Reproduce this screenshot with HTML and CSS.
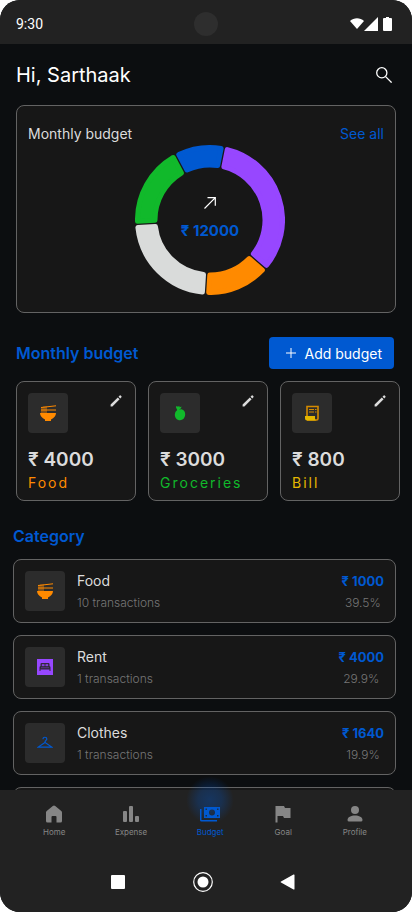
FILE: index.html
```html
<!DOCTYPE html>
<html lang="en">
<head>
<meta charset="utf-8">
<meta name="viewport" content="width=device-width, initial-scale=1">
<title>Budget</title>
<link rel="stylesheet" href="styles.css">
</head>
<body>
<svg class="sprite" aria-hidden="true">
  <symbol id="bowl" viewBox="0 0 16 16">
    <path d="M0 8h16c0 3-2 5-5 6.500V16H5v-1.500C2 13 0 11 0 8z"/>
    <path d="M2 8V2M4 8V1.500M6 8V1.500" fill="none" stroke="currentColor" stroke-width=".8"/>
    <path d="M1 2.500L16 .8M1 5h15" fill="none" stroke="currentColor" stroke-width="1"/>
  </symbol>
  <symbol id="pencil" viewBox="0 0 12 12">
    <path d="M.6 9.600L7.800 2.400l1.800 1.800-7.200 7.200H.6zM8.500 1.700L9.700.6q.5-.5 1 0l.7.7q.5.500 0 1l-1.100 1.200z"/>
  </symbol>
</svg>
<div class="app">
  <div class="status">
    <span class="time">9:30</span>
    <span class="camera"></span>
    <svg class="signals" viewBox="0 0 42 16" aria-hidden="true">
      <path d="M0 5c4-3.600 10-3.600 14 0L7 13z"/>
      <path d="M28 1v14H14z"/>
      <path d="M34 2h2V1h3v1h2q1 0 1 1v11q0 1-1 1h-7q-1 0-1-1V3q0-1 1-1z"/>
    </svg>
  </div>

  <main class="content">
    <header class="greeting">
      <h1>Hi, Sarthaak</h1>
      <button class="search" type="button" aria-label="Search">
        <svg viewBox="0 0 16 16"><circle cx="5.800" cy="5.800" r="5.100"/><path d="M9.600 9.600l6 6"/></svg>
      </button>
    </header>

    <section class="overview">
      <div class="overview-head">
        <h2>Monthly budget</h2>
        <a href="#all">See all</a>
      </div>
      <div class="donut">
        <svg class="ring" viewBox="0 0 150 150" aria-hidden="true">
          <path class="blue" d="M43.800 9.600A72.500 72.500 0 0 1 86.100 3.400L82.700 20.500A55 55 0 0 0 52 25z"/>
          <path class="purple" d="M92.300 4.600A72.500 72.500 0 0 1 131.600 120.300L118.400 108.800A55 55 0 0 0 88.900 21.800z"/>
          <path class="orange" d="M127.400 125.100A72.500 72.500 0 0 1 73.700 147.500L74.800 130A55 55 0 0 0 114.200 113.600z"/>
          <path class="silver" d="M67.400 147.100A72.500 72.500 0 0 1 2.900 82.600L20.400 81.500A55 55 0 0 0 68.500 129.600z"/>
          <path class="green" d="M2.500 76.300A72.500 72.500 0 0 1 38.200 12.500L46.400 28A55 55 0 0 0 20 75.200z"/>
        </svg>
        <div class="total">
          <svg class="arrow" viewBox="0 0 12 12" aria-hidden="true"><path d="M.5 11.500L11.300.7M3.500.7h7.800v8"/></svg>
          <strong>₹ 12000</strong>
        </div>
      </div>
    </section>

    <section>
      <div class="section-head">
        <h2>Monthly budget</h2>
        <button class="add" type="button">
          <svg viewBox="0 0 10 10" aria-hidden="true"><path d="M5 0v10M0 5h10"/></svg>Add budget
        </button>
      </div>
      <ul class="budgets">
        <li class="budget food">
          <div class="budget-top">
            <span class="tile"><svg><use href="#bowl"/></svg></span>
            <button class="edit" type="button" aria-label="Edit food"><svg><use href="#pencil"/></svg></button>
          </div>
          <strong>₹ 4000</strong>
          <span class="label">Food</span>
        </li>
        <li class="budget groceries">
          <div class="budget-top">
            <span class="tile"><svg viewBox="0 0 16 16"><path d="M7 4.800Q8 4 9.500 4.200q3.700 1 3.700 5.300c-.2 3.500-2.300 5.700-5.200 5.700S3 13 2.800 9.700q0-3 2.400-4.700L4 2.500 4.300.9l1.900.8.900-.9.700 1.500L9.500 1.500 9 3.300z"/></svg></span>
            <button class="edit" type="button" aria-label="Edit groceries"><svg><use href="#pencil"/></svg></button>
          </div>
          <strong>₹ 3000</strong>
          <span class="label">Groceries</span>
        </li>
        <li class="budget bill">
          <div class="budget-top">
            <span class="tile"><svg viewBox="0 0 16 16"><path class="roll" d="M3 11V1.500h11v12q0 1.500-1.500 1.500H3"/><path class="lines" d="M5 4.500h5M5 7h5M11 4.500h1.500M11 7h1.500"/><path d="M1 11h10v2.500q0 1 1 2H3q-2 0-2-2z"/></svg></span>
            <button class="edit" type="button" aria-label="Edit bill"><svg><use href="#pencil"/></svg></button>
          </div>
          <strong>₹ 800</strong>
          <span class="label">Bill</span>
        </li>
      </ul>
    </section>

    <section class="categories">
      <h2>Category</h2>
      <ul>
        <li class="category food">
          <span class="tile"><svg><use href="#bowl"/></svg></span>
          <div class="name"><h3>Food</h3><p>10 transactions</p></div>
          <div class="sum"><strong>₹ 1000</strong><span>39.5%</span></div>
        </li>
        <li class="category rent">
          <span class="tile"><svg viewBox="0 0 16 16"><path d="M0 0h16v16H0z"/><path class="cut" d="M4.500 4h7q1 0 1 1v2q1 0 1 1.500V12h-1v-1.500h-9V12h-1V8.500Q2.500 7 3.500 7V5q0-1 1-1z"/><path class="pillow" d="M5 5.500h2.300v1.300H5zM8.700 5.500H11v1.300H8.700zM4 8.700h8"/></svg></span>
          <div class="name"><h3>Rent</h3><p>1 transactions</p></div>
          <div class="sum"><strong>₹ 4000</strong><span>29.9%</span></div>
        </li>
        <li class="category clothes">
          <span class="tile"><svg viewBox="0 0 16 16"><path class="hanger" d="M6 4.200C6 1.500 9.800 1.700 9.800 4c0 1.300-1.800 1.500-1.800 3v.5l6.800 4.600H1.200L8 7.500"/></svg></span>
          <div class="name"><h3>Clothes</h3><p>1 transactions</p></div>
          <div class="sum"><strong>₹ 1640</strong><span>19.9%</span></div>
        </li>
        <li class="category"></li>
      </ul>
    </section>
  </main>

  <footer class="bottom">
    <nav class="tabs">
      <a href="#home"><svg viewBox="0 0 20 20"><path d="M2 8.500Q2 7.500 3 6.700L8.800 2q1.200-1 2.400 0L17 6.700q1 .8 1 1.800V17q0 1.500-1.500 1.500h-4v-5.500q0-1-1-1h-3q-1 0-1 1v5.500h-4Q2 18.500 2 17z"/></svg>Home</a>
      <a href="#expense"><svg viewBox="0 0 20 20"><rect x="2" y="7" width="4" height="11" rx="1"/><rect x="8" y="2" width="4" height="16" rx="1"/><rect x="14" y="12" width="4" height="6" rx="1"/></svg>Expense</a>
      <a class="active" href="#budget"><svg viewBox="0 0 20 20"><path fill-rule="evenodd" d="M4 3h16v11H4zM12 5.500a3 3 0 1 0 0 6a3 3 0 0 0 0-6zM5.500 4.500V6H7V4.500zM17 4.500V6h1.500V4.500zM5.500 11v1.500H7V11zM17 11v1.500h1.500V11z"/><path d="M0 5h1.500v11H17v1.500H1.500Q0 17.500 0 16z"/></svg>Budget</a>
      <a href="#goal"><svg viewBox="0 0 20 20"><path d="M2.500 2h8.500l1 2h5.500v10H11l-1-2H4.500v6.500h-2z"/></svg>Goal</a>
      <a href="#profile"><svg viewBox="0 0 20 20"><circle cx="10" cy="6" r="4"/><path d="M2.500 16c0-3 3.500-4.500 7.500-4.500s7.500 1.500 7.500 4.500q0 1.500-1.500 1.500H4q-1.500 0-1.500-1.500z"/></svg>Profile</a>
    </nav>
    <div class="system">
      <button type="button" aria-label="Recent apps"><svg viewBox="0 0 20 20"><rect x="3" y="3" width="14" height="14" rx="1"/></svg></button>
      <button type="button" aria-label="Home screen"><svg viewBox="0 0 20 20"><circle class="outline" cx="10" cy="10" r="9.300"/><circle cx="10" cy="10" r="5.500"/></svg></button>
      <button type="button" aria-label="Back"><svg viewBox="0 0 20 20"><path d="M3 9.400L15.500 2.500q1-.4 1 .6v13.800q0 1-1 .6L3 10.600q-1-.6 0-1.200z"/></svg></button>
    </div>
  </footer>
</div>
</body>
</html>
```
FILE: styles.css
```css
* { box-sizing: border-box; }
body {
  margin: 0;
  background: #fff;
  color: #dcdcdc;
  font-family: Inter, "Noto Sans", sans-serif;
}
h1, h2, h3, p, ul { margin: 0; padding: 0; }
ul { list-style: none; }
button { padding: 0; border: 0; background: none; color: inherit; font: inherit; }
a { color: #0059d1; text-decoration: none; }
svg { display: block; fill: currentColor; }
.sprite { position: absolute; width: 0; height: 0; }

.app {
  display: flex;
  flex-direction: column;
  height: 100vh;
  overflow: hidden;
  border-radius: 20px;
  background: #0c0e10;
}
.status {
  display: grid;
  grid-template-columns: 1fr auto 1fr;
  align-items: center;
  flex: none;
  height: 44px;
  padding: 4px 16px 0;
  background: #222;
  color: #fff;
}
.time { font: 14px/20px Roboto, sans-serif; }
.camera { width: 24px; height: 24px; border-radius: 50%; background: #2e2e2e; }
.signals { width: 42px; height: 16px; margin-right: 4px; justify-self: end; }

.content { flex: 1; min-height: 0; overflow: hidden; }
.greeting {
  display: flex;
  align-items: center;
  justify-content: space-between;
  padding: 19px 20px 18px 16px;
  color: #fff;
}
.greeting h1 { font-size: 20px; line-height: 24px; font-weight: 400; }
.search svg { width: 16px; height: 16px; fill: none; stroke: #fff; stroke-width: 1.300; }

.overview {
  margin: 0 16px;
  padding: 16px 11px;
  border: 1px solid #636363;
  border-radius: 8px;
  background: #171717;
}
.overview-head { display: flex; justify-content: space-between; font-size: 14px; line-height: 24px; }
.overview-head h2 { font: inherit; }
.donut { display: grid; place-items: center; margin: 0 -8px 1px 0; }
.ring, .total { grid-area: 1 / 1; }
.ring { width: 150px; height: 150px; margin-top: -1px; stroke-width: 5; stroke-linejoin: round; }
.blue { fill: #0059d1; stroke: #0059d1; }
.purple { fill: #9747ff; stroke: #9747ff; }
.orange { fill: #ff8a00; stroke: #ff8a00; }
.silver { fill: #d9dbda; stroke: #d9dbda; }
.green { fill: #11b92b; stroke: #11b92b; }
.total { display: flex; flex-direction: column; align-items: center; gap: 12px; padding-bottom: 4px; color: #0059d1; }
.total strong { font-size: 15px; line-height: 20px; font-weight: 700; }
.arrow { width: 12px; height: 12px; fill: none; stroke: #fff; stroke-width: 1.200; }

.section-head {
  display: flex;
  align-items: center;
  justify-content: space-between;
  padding: 24px 18px 12px 16px;
}
.section-head h2, .categories h2 { color: #0059d1; font-size: 16px; line-height: 20px; font-weight: 600; }
.add {
  display: flex;
  align-items: center;
  gap: 9px;
  height: 32px;
  padding: 0 12px 0 17px;
  border-radius: 4px;
  background: #0059d1;
  color: #fff;
  font-size: 14px;
}
.add svg { width: 10px; height: 10px; stroke: #fff; }

.budgets { display: flex; gap: 12px; padding-left: 16px; overflow: hidden; }
.budget {
  flex: none;
  width: 120px;
  padding: 11px 11px 6px;
  border: 1px solid #636363;
  border-radius: 8px;
  background: #171717;
}
.budget-top { display: flex; align-items: flex-start; justify-content: space-between; margin-bottom: 15px; }
.tile {
  display: grid;
  place-items: center;
  flex: none;
  width: 40px;
  height: 40px;
  border-radius: 4px;
  background: #2c2c2c;
}
.tile svg { width: 16px; height: 16px; }
.edit { padding: 2px; }
.edit svg { width: 12px; height: 12px; }
.budget strong { display: block; color: #dcdcdc; font-size: 19px; line-height: 24px; font-weight: 600; }
.label { display: block; font-size: 14px; line-height: 22px; letter-spacing: 2px; }
.food .tile, .food .label { color: #ff8a00; }
.groceries .tile, .groceries .label { color: #11b92b; }
.bill .tile, .bill .label { color: #e5b800; }
.roll, .lines { fill: none; stroke: #d58b00; stroke-width: 1.600; }
.lines { stroke-width: 1.200; }

.categories { padding: 25px 16px 0 13px; }
.categories ul { display: flex; flex-direction: column; gap: 12px; margin-top: 13px; }
.category {
  display: flex;
  align-items: center;
  gap: 12px;
  min-height: 64px;
  padding: 0 11px;
  border: 1px solid #636363;
  border-radius: 8px;
  background: #171717;
}
.name { flex: 1; }
.name h3, .sum strong { display: block; line-height: 22px; }
.name h3 { font-size: 14px; font-weight: 400; }
.name p, .sum span { margin-top: 2px; color: #767676; font-size: 12px; line-height: 18px; font-weight: 300; }
.sum { display: flex; flex-direction: column; align-items: center; color: #0059d1; }
.sum strong { font-size: 13px; font-weight: 700; }
.rent .tile { color: #9747ff; }
.cut { fill: #302a38; }
.pillow { fill: #9747ff; stroke: #9747ff; stroke-width: .4; }
.clothes .tile { color: #0059d1; }
.hanger { fill: none; stroke: currentColor; stroke-width: 1.200; }

.bottom { position: relative; flex: none; background: #222; }
.tabs {
  display: flex;
  justify-content: space-between;
  padding: 14px 45px 0 43px;
}
.tabs a {
  position: relative;
  display: flex;
  flex-direction: column;
  align-items: center;
  gap: 3px;
  color: #868686;
  font-size: 8px;
  line-height: 10px;
}
.tabs svg { position: relative; width: 20px; height: 20px; }
.tabs .active { color: #0059d1; }
.active::before {
  content: "";
  position: absolute;
  top: -28px;
  left: 50%;
  width: 48px;
  height: 48px;
  margin-left: -24px;
  border-radius: 50%;
  background: radial-gradient(circle, rgba(0, 89, 209, .35), rgba(0, 89, 209, .25) 35%, transparent 70%);
}
.system { display: flex; justify-content: center; gap: 65px; padding: 35px 6px 20px 0; color: #fff; }
.system svg { width: 20px; height: 20px; }
.outline { fill: none; stroke: currentColor; stroke-width: 1.200; }
```
